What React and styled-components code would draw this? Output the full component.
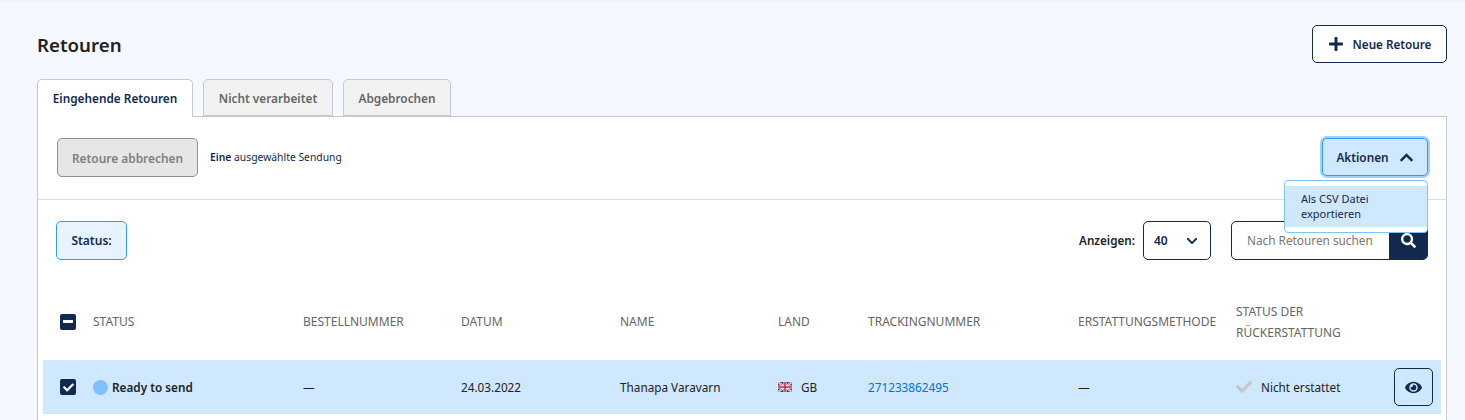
import React from 'react';
import styled, { createGlobalStyle } from 'styled-components';
import { FaPlus, FaChevronUp, FaChevronDown, FaSearch, FaEye, FaCheck } from 'react-icons/fa';

const navy = '#13294f';

const GlobalStyle = createGlobalStyle`
  html, body {
    margin: 0;
    height: 100%;
    overflow: hidden;
    background: #f5f9ff;
    font-family: "Noto Sans", "Liberation Sans", sans-serif;
    color: #222;
  }
  #root { height: 100%; }
  * { box-sizing: border-box; }
`;

const Page = styled.div`
  height: 100%;
  padding: 25px 18px 0 37px;
  display: flex;
  flex-direction: column;
  box-shadow: inset 0 3px 3px -2px rgba(0, 0, 0, 0.04);
`;

const Header = styled.div`
  display: flex;
  justify-content: space-between;
  align-items: flex-start;
  height: 54px;
`;

const Title = styled.h1`
  margin: 8px 0 0;
  font-size: 18.7px;
  line-height: 24px;
  font-weight: 600;
  color: #222;
`;

const NewButton = styled.button`
  display: flex;
  align-items: center;
  justify-content: center;
  gap: 9px;
  width: 135px;
  height: 38px;
  border: 1px solid ${navy};
  border-radius: 5px;
  background: #fff;
  color: ${navy};
  font: 600 11.7px "Noto Sans", sans-serif;
`;

const Tabs = styled.div`
  display: flex;
  gap: 10px;
  height: 38px;
  position: relative;
  z-index: 1;
`;

const Tab = styled.div`
  height: ${(p) => (p.$active ? '38px' : '37px')};
  width: ${(p) => p.$width}px;
  padding-bottom: ${(p) => (p.$active ? '1px' : '0')};
  display: flex;
  align-items: center;
  justify-content: center;
  border: 1px solid #c6c9cf;
  border-bottom: ${(p) => (p.$active ? '0' : '1px solid #c6c9cf')};
  border-radius: 5px 5px 0 0;
  background: ${(p) => (p.$active ? '#fff' : '#f2f2f2')};
  color: ${(p) => (p.$active ? navy : '#666')};
  font-size: 11.8px;
  font-weight: 600;
`;

const Card = styled.div`
  flex: 1;
  margin-top: -1px;
  border: 1px solid #c6c9cf;
  border-bottom: 0;
  background: #fff;
`;

const ActionBar = styled.div`
  height: 83px;
  padding: 21px 18px 0 19px;
  display: flex;
  align-items: flex-start;
  border-bottom: 1px solid #dcdcdc;
`;

const CancelButton = styled.button`
  width: 141px;
  height: 39px;
  border: 1px solid #8a8f99;
  border-radius: 5px;
  background: #e6e6e6;
  color: #808080;
  font: 600 11.9px "Noto Sans", sans-serif;
`;

const Selected = styled.div`
  margin: 11px 0 0 12px;
  font-size: 10.35px;
  line-height: 16px;
  color: ${navy};
  b { font-weight: 600; }
`;

const ActionsWrap = styled.div`
  margin-left: auto;
  position: relative;
`;

const ActionsButton = styled.button`
  display: flex;
  align-items: center;
  gap: 10px;
  justify-content: center;
  width: 106px;
  height: 38px;
  border: 1px solid #2f9bf5;
  border-radius: 5px;
  background: #d0e8fe;
  box-shadow: 0 0 0 2px #a0d2fd;
  color: ${navy};
  font: 600 11.8px "Noto Sans", sans-serif;
`;

const Menu = styled.div`
  position: absolute;
  z-index: 2;
  top: 42px;
  right: 0;
  width: 144px;
  padding: 5px 0;
  background: #fff;
  border: 1px solid #7fc1fb;
  border-radius: 4px;
`;

const MenuItem = styled.div`
  padding: 5px 16px 3px;
  height: 41px;
  background: #d0e8fe;
  color: ${navy};
  font-size: 11px;
  line-height: 15px;
`;

const FilterBar = styled.div`
  height: 87px;
  padding: 21px 18px 0 18px;
  display: flex;
  align-items: flex-start;
`;

const StatusFilter = styled.button`
  width: 71px;
  height: 39px;
  border: 1px solid #2f9bf5;
  border-radius: 5px;
  background: #e7f3fe;
  color: ${navy};
  font: 600 12px "Noto Sans", sans-serif;
`;

const ShowLabel = styled.span`
  margin: 11px 8px 0 auto;
  font-size: 11.7px;
  line-height: 16px;
  font-weight: 600;
  color: #222;
`;

const PageSize = styled.div`
  width: 68px;
  height: 39px;
  padding: 0 12px 0 10px;
  display: flex;
  align-items: center;
  justify-content: space-between;
  border: 1px solid ${navy};
  border-radius: 5px;
  color: ${navy};
  font-size: 12px;
  font-weight: 600;
`;

const Search = styled.div`
  margin-left: 20px;
  width: 197px;
  height: 39px;
  display: flex;
  border: 1px solid ${navy};
  border-radius: 5px;
  overflow: hidden;
`;

const SearchText = styled.div`
  flex: 1;
  padding-left: 15px;
  line-height: 37px;
  font-size: 11.8px;
  color: #767676;
`;

const SearchButton = styled.div`
  width: 38px;
  display: flex;
  align-items: center;
  justify-content: center;
  background: ${navy};
  color: #fff;
`;

const columns = '50px 210px 158px 159px 158px 90px 210px 158px 205px';

const TableHead = styled.div`
  display: grid;
  grid-template-columns: ${columns};
  align-items: center;
  height: 73px;
  padding-bottom: 4px;
  margin-left: 5px;
  color: #666;
  font-size: 12px;
  line-height: 21px;
  text-transform: uppercase;
`;

const TableRow = styled.div`
  display: grid;
  grid-template-columns: ${columns};
  align-items: center;
  width: 1398px;
  height: 54px;
  margin-left: 5px;
  background: #d0e8fe;
  font-size: 11.75px;
  color: #222;
`;

const Check = styled.span`
  display: flex;
  align-items: center;
  justify-content: center;
  width: 16px;
  height: 16px;
  margin-left: 17px;
  border-radius: 2px;
  background: ${navy};
  color: #fff;
`;

const Dash = styled.span`
  width: 10px;
  height: 2.5px;
  background: #fff;
`;

const StatusCell = styled.div`
  display: flex;
  align-items: center;
  gap: 4px;
  font-weight: 600;
`;

const Dot = styled.span`
  width: 15px;
  height: 15px;
  border-radius: 50%;
  background: #7ebffc;
`;

const CountryCell = styled.div`
  display: flex;
  align-items: center;
  gap: 9px;
`;

const TrackingLink = styled.a`
  color: #0070e0;
`;

const RefundCell = styled.div`
  display: flex;
  align-items: center;
  gap: 9px;
  padding-right: 8px;
  color: #222;
`;

const ViewButton = styled.button`
  margin-left: auto;
  width: 39px;
  height: 38px;
  display: flex;
  align-items: center;
  justify-content: center;
  border: 1px solid ${navy};
  border-radius: 5px;
  background: transparent;
  color: ${navy};
`;

const UkFlag = () => (
  <svg width="14" height="10" viewBox="0 0 14 10">
    <rect width="14" height="10" fill="#2b3f86" />
    <path d="M0 0L14 10M14 0L0 10" stroke="#fff" strokeWidth="2" />
    <path d="M0 0L14 10M14 0L0 10" stroke="#c8283a" strokeWidth="0.7" />
    <path d="M7 0V10M0 5H14" stroke="#fff" strokeWidth="3" />
    <path d="M7 0V10M0 5H14" stroke="#c8283a" strokeWidth="1.6" />
  </svg>
);

const App = () => (
  <>
    <GlobalStyle />
    <Page>
      <Header>
        <Title>Retouren</Title>
        <NewButton>
          <FaPlus size={16} />
          Neue Retoure
        </NewButton>
      </Header>
      <Tabs>
        <Tab $active $width={156}>Eingehende Retouren</Tab>
        <Tab $width={130}>Nicht verarbeitet</Tab>
        <Tab $width={108}>Abgebrochen</Tab>
      </Tabs>
      <Card>
        <ActionBar>
          <CancelButton>Retoure abbrechen</CancelButton>
          <Selected><b>Eine</b> ausgewählte Sendung</Selected>
          <ActionsWrap>
            <ActionsButton>
              Aktionen
              <FaChevronUp size={15} />
            </ActionsButton>
            <Menu>
              <MenuItem>Als CSV Datei exportieren</MenuItem>
            </Menu>
          </ActionsWrap>
        </ActionBar>
        <FilterBar>
          <StatusFilter>Status:</StatusFilter>
          <ShowLabel>Anzeigen:</ShowLabel>
          <PageSize>
            40
            <FaChevronDown size={12} />
          </PageSize>
          <Search>
            <SearchText>Nach Retouren suchen</SearchText>
            <SearchButton><FaSearch size={15} /></SearchButton>
          </Search>
        </FilterBar>
        <TableHead>
          <Check><Dash /></Check>
          <span>Status</span>
          <span>Bestellnummer</span>
          <span>Datum</span>
          <span>Name</span>
          <span>Land</span>
          <span>Trackingnummer</span>
          <span>Erstattungsmethode</span>
          <span>Status der<br />Rückerstattung</span>
        </TableHead>
        <TableRow>
          <Check><FaCheck size={11} /></Check>
          <StatusCell><Dot />Ready to send</StatusCell>
          <span>—</span>
          <span>24.03.2022</span>
          <span>Thanapa Varavarn</span>
          <CountryCell><UkFlag />GB</CountryCell>
          <TrackingLink>271233862495</TrackingLink>
          <span>—</span>
          <RefundCell>
            <FaCheck size={16} color="#c3c6ca" />
            Nicht erstattet
            <ViewButton><FaEye size={17} /></ViewButton>
          </RefundCell>
        </TableRow>
      </Card>
    </Page>
  </>
);

export default App;
